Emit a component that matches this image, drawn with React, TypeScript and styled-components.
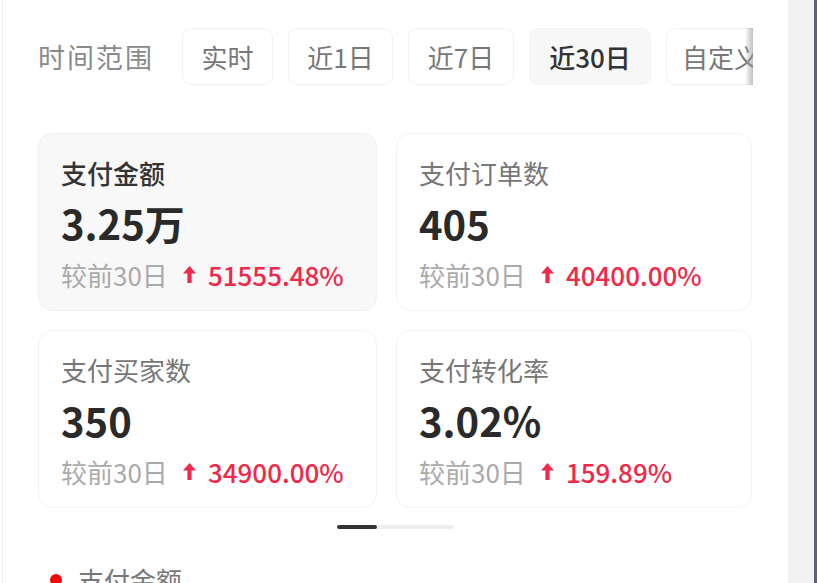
import React from "react";
import styled, { createGlobalStyle } from "styled-components";

const Global = createGlobalStyle`
  html, body { margin: 0; padding: 0; background: #ffffff; }
  body { font-family: "Noto Sans CJK SC", "Noto Sans", sans-serif; }
  * { box-sizing: border-box; }
`;

const Page = styled.div`
  display: flex;
  width: 817px;
  height: 583px;
  overflow: hidden;
  background: #fff;
`;

const Panel = styled.div`
  width: 786px;
  margin-left: 2px;
  border-left: 1px solid #efefef;
  padding: 28px 35px 0 35px;
  display: flex;
  flex-direction: column;
`;

const SideStrip = styled.div`
  width: 26px;
  background: #f2f2f2;
`;

const EdgeLine = styled.div`
  width: 3px;
  background: #5b6272;
`;

const TabRow = styled.div`
  display: flex;
  align-items: center;
  height: 57px;
`;

const RangeLabel = styled.div`
  font-size: 27px;
  color: #8a8a8a;
  letter-spacing: 2px;
  margin-right: 28px;
  white-space: nowrap;
`;

const TabScroller = styled.div`
  position: relative;
  flex: 1;
  overflow: hidden;
  height: 100%;
`;

const TabTrack = styled.div`
  display: flex;
  gap: 15px;
  height: 100%;
`;

const Tab = styled.div<{ $active?: boolean; $w: number }>`
  flex: 0 0 ${(p) => p.$w}px;
  height: 57px;
  border-radius: 9px;
  border: 1px solid ${(p) => (p.$active ? "#f3f3f3" : "#f2f2f2")};
  background: ${(p) => (p.$active ? "#f7f7f7" : "#fff")};
  color: ${(p) => (p.$active ? "#333" : "#777")};
  font-weight: ${(p) => (p.$active ? 500 : 400)};
  font-size: 26px;
  display: flex;
  align-items: center;
  justify-content: center;
  white-space: nowrap;
`;

const Fade = styled.div`
  position: absolute;
  right: 0;
  top: 0;
  width: 7px;
  height: 100%;
  background: linear-gradient(to right, rgba(200, 200, 200, 0.2), rgba(150, 150, 150, 0.6));
`;

const Grid = styled.div`
  margin-top: 48px;
  display: grid;
  grid-template-columns: 339px 356px;
  column-gap: 19px;
  row-gap: 19px;
`;

const Card = styled.div<{ $active?: boolean }>`
  height: 178px;
  border-radius: 14px;
  border: 1px solid ${(p) => (p.$active ? "#f0f0f0" : "#f3f3f3")};
  background: ${(p) => (p.$active ? "#f8f8f8" : "#fff")};
  padding: 21px 22px 0 22px;
  display: flex;
  flex-direction: column;
`;

const CardTitle = styled.div<{ $active?: boolean }>`
  font-size: 26px;
  line-height: 36px;
  color: ${(p) => (p.$active ? "#333" : "#777")};
  font-weight: ${(p) => (p.$active ? 500 : 400)};
`;

const CardValue = styled.div`
  margin-top: 8px;
  font-size: 40px;
  line-height: 48px;
  font-weight: 700;
  color: #2a2a2a;
`;

const Compare = styled.div`
  margin-top: 10px;
  display: flex;
  align-items: center;
  height: 34px;
  font-size: 26px;
  color: #aaaaaa;
`;

const Delta = styled.span`
  display: inline-flex;
  align-items: center;
  margin-left: 15px;
  color: #f0284a;
  font-weight: 500;
  font-size: 26px;
  gap: 12px;
`;

const Indicator = styled.div`
  margin: 17px auto 0 auto;
  display: flex;
  width: 117px;
  height: 4px;
  border-radius: 2px;
  background: #eeeeee;
`;

const IndicatorThumb = styled.div`
  width: 40px;
  height: 4px;
  border-radius: 2px;
  background: #333;
`;

const ChartLegend = styled.div`
  margin-top: 33px;
  margin-left: 12px;
  display: flex;
  align-items: center;
  gap: 16px;
  font-size: 26px;
  color: #777;
  line-height: 36px;
`;

const Dot = styled.span`
  width: 12px;
  height: 12px;
  border-radius: 50%;
  background: #f00a0a;
`;

const UpArrow = () => (
  <svg width="13" height="17" viewBox="0 0 13 17">
    <path d="M6.5 0 L13 7.5 L8.6 7.5 L8.6 17 L4.4 17 L4.4 7.5 L0 7.5 Z" fill="#f0284a" />
  </svg>
);

const tabs = [
  { t: "实时", w: 91 },
  { t: "近1日", w: 105 },
  { t: "近7日", w: 106 },
  { t: "近30日", w: 122, active: true },
  { t: "自定义", w: 110 },
];

const cards = [
  { title: "支付金额", value: "3.25万", delta: "51555.48%", active: true },
  { title: "支付订单数", value: "405", delta: "40400.00%" },
  { title: "支付买家数", value: "350", delta: "34900.00%" },
  { title: "支付转化率", value: "3.02%", delta: "159.89%" },
];

export default function App() {
  return (
    <>
      <Global />
      <Page>
        <Panel>
          <TabRow>
            <RangeLabel>时间范围</RangeLabel>
            <TabScroller>
              <TabTrack>
                {tabs.map((tab) => (
                  <Tab key={tab.t} $active={tab.active} $w={tab.w}>
                    {tab.t}
                  </Tab>
                ))}
              </TabTrack>
              <Fade />
            </TabScroller>
          </TabRow>
          <Grid>
            {cards.map((c) => (
              <Card key={c.title} $active={c.active}>
                <CardTitle $active={c.active}>{c.title}</CardTitle>
                <CardValue>{c.value}</CardValue>
                <Compare>
                  较前30日
                  <Delta>
                    <UpArrow />
                    {c.delta}
                  </Delta>
                </Compare>
              </Card>
            ))}
          </Grid>
          <Indicator>
            <IndicatorThumb />
          </Indicator>
          <ChartLegend>
            <Dot />
            支付金额
          </ChartLegend>
        </Panel>
        <SideStrip />
        <EdgeLine />
      </Page>
    </>
  );
}
